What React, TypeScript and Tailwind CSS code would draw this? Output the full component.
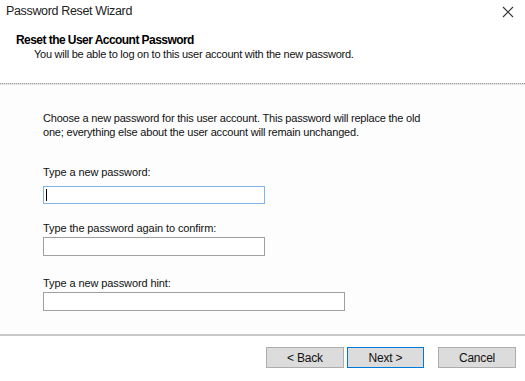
export default function App() {
  return (
    <div
      className="w-[525px] h-[381px] bg-white text-black flex flex-col overflow-hidden"
      style={{ fontFamily: '"Liberation Sans", Arial, sans-serif' }}
    >
      {/* title bar */}
      <div className="h-[23px] flex items-center justify-between pl-[6px] pr-[8px] shrink-0">
        <span className="text-[12.5px] tracking-[-0.35px] text-[#222]">Password Reset Wizard</span>
        <svg width="12" height="12" viewBox="0 0 12 12" className="mr-[3px]">
          <path d="M1 1L11 11M11 1L1 11" stroke="#333" strokeWidth="1.1" />
        </svg>
      </div>

      {/* header */}
      <div className="h-[60px] shrink-0 pl-[16px] pt-[10px]">
        <div className="text-[12px] font-bold leading-[14px] tracking-[-0.55px]">Reset the User Account Password</div>
        <div className="text-[11px] leading-[14px] pl-[18px] tracking-[-0.25px] text-[#111]">
          You will be able to log on to this user account with the new password.
        </div>
      </div>
      <div className="h-[2px] shrink-0 border-t border-dotted border-[#a0a0a0] bg-[#e3e3e3]" />

      {/* body */}
      <div className="flex-1 flex flex-col pl-[43px] pt-[26px] text-[11px] tracking-[-0.1px] text-[#111] bg-[#fdfdfd]">
        <p className="leading-[14px] w-[400px] tracking-[-0.2px]">
          Choose a new password for this user account. This password will replace the old one; everything else
          about the user account will remain unchanged.
        </p>

        <label className="mt-[26px] leading-[14px]">Type a new password:</label>
        <div className="mt-[7px] w-[222px] h-[18px] border border-[#7eb4ea] bg-white flex items-center pl-[2px]">
          <div className="w-px h-[12px] bg-black" />
        </div>

        <label className="mt-[17px] leading-[14px]">Type the password again to confirm:</label>
        <div className="mt-[2px] w-[222px] h-[19px] border border-[#a0a0a0] bg-white" />

        <label className="mt-[20px] leading-[14px]">Type a new password hint:</label>
        <div className="mt-[2px] w-[302px] h-[19px] border border-[#a0a0a0] bg-white" />
      </div>

      <div className="h-[2px] shrink-0 bg-[#c8c8c8]" />

      {/* buttons */}
      <div className="h-[45px] shrink-0 flex items-center pl-[266px] pb-[2px] text-[12px] tracking-[-0.2px]">
        <button className="w-[78px] h-[21px] border border-[#adadad] bg-[#dcdcdc] text-[#111]">&lt; Back</button>
        <button className="ml-[3px] w-[77px] h-[21px] border border-[#0078d7] bg-[#dcdcdc] text-[#111]">
          Next &gt;
        </button>
        <button className="ml-[14px] w-[78px] h-[21px] border border-[#adadad] bg-[#dcdcdc] text-[#111]">
          Cancel
        </button>
      </div>
    </div>
  );
}
